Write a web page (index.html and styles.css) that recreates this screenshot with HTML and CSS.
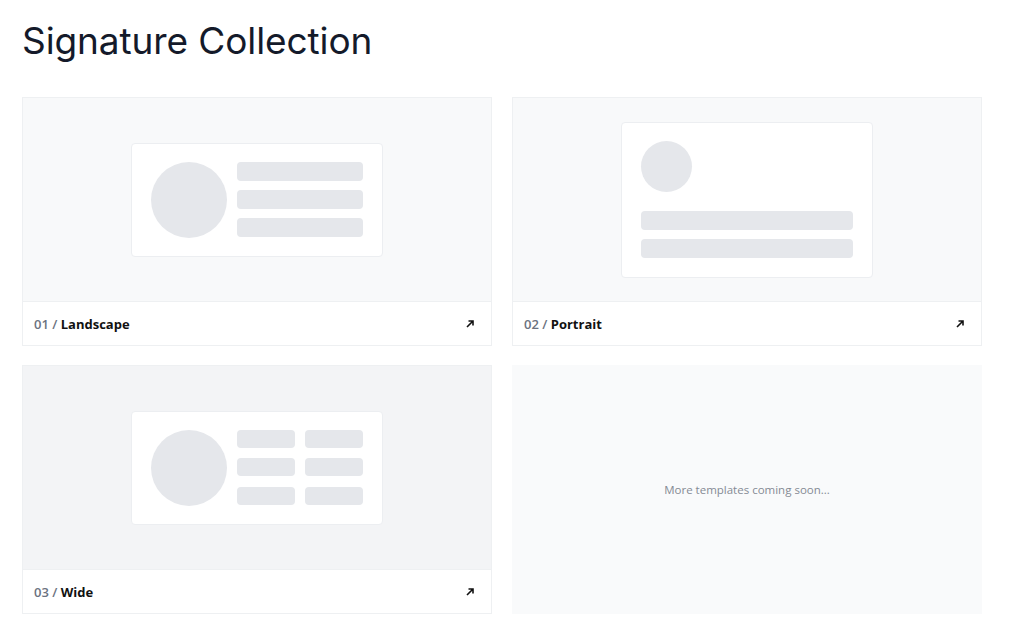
FILE: index.html
```html
<!DOCTYPE html>
<html lang="en">
<head>
  <meta charset="UTF-8" />
  <title>Signature Collection</title>
  <meta name="viewport" content="width=device-width, initial-scale=1.0" />
  <link rel="stylesheet" href="styles.css">
</head>
<body>

  <h1 class="page-title">Signature Collection</h1>

  <div class="template-grid">

    <!-- 01 landscape -->
    <div class="template-card">
      <div class="preview">
        <div class="mock mock-landscape">
          <div class="mock-avatar"></div>
          <div class="mock-lines">
            <div class="bar"></div>
            <div class="bar"></div>
            <div class="bar"></div>
          </div>
        </div>
      </div>
      <div class="caption">
        <span><span class="num">01 /</span> <b>Landscape</b></span>
        <svg class="arrow" width="10" height="10" viewBox="0 0 10 10"><path d="M2 8 L8 2 M3.5 2 H8 V6.5" fill="none" stroke="#111" stroke-width="1.6"/></svg>
      </div>
    </div>

    <!-- 02 portrait -->
    <div class="template-card">
      <div class="preview">
        <div class="mock mock-portrait">
          <div class="mock-avatar"></div>
          <div class="mock-lines">
            <div class="bar"></div>
            <div class="bar"></div>
          </div>
        </div>
      </div>
      <div class="caption">
        <span><span class="num">02 /</span> <b>Portrait</b></span>
        <svg class="arrow" width="10" height="10" viewBox="0 0 10 10"><path d="M2 8 L8 2 M3.5 2 H8 V6.5" fill="none" stroke="#111" stroke-width="1.6"/></svg>
      </div>
    </div>

    <!-- 03 wide -->
    <div class="template-card">
      <div class="preview preview-dark">
        <div class="mock mock-landscape">
          <div class="mock-avatar"></div>
          <div class="mock-grid">
            <div class="bar"></div><div class="bar"></div>
            <div class="bar"></div><div class="bar"></div>
            <div class="bar"></div><div class="bar"></div>
          </div>
        </div>
      </div>
      <div class="caption">
        <span><span class="num">03 /</span> <b>Wide</b></span>
        <svg class="arrow" width="10" height="10" viewBox="0 0 10 10"><path d="M2 8 L8 2 M3.5 2 H8 V6.5" fill="none" stroke="#111" stroke-width="1.6"/></svg>
      </div>
    </div>

    <div class="coming-soon">More templates coming soon...</div>

  </div>

</body>
</html>
```

FILE: styles.css
```css
* { box-sizing: border-box; }
body {
  margin: 0;
  padding: 0 42px 0 22px;
  background: #fff;
  font-family: "Open Sans", "Noto Sans", sans-serif;
  color: #111827;
}
.page-title {
  font-family: Inter, "DejaVu Sans", sans-serif;
  font-weight: 400;
  font-size: 37px;
  letter-spacing: -0.1px;
  line-height: 44px;
  margin: 19px 0 34px;
  color: #141a2a;
}
.template-grid {
  display: grid;
  grid-template-columns: 470px 470px;
  column-gap: 20px;
  row-gap: 19px;
}
.template-card {
  border: 1px solid #eef0f2;
  background: #fff;
  display: flex;
  flex-direction: column;
}
.preview {
  height: 203px;
  background: #f8f9fa;
  display: flex;
  align-items: center;
  justify-content: center;
}
.preview-dark { background: #f3f4f6; }
.mock {
  background: #fff;
  border: 1px solid #eceef1;
  border-radius: 4px;
  padding: 18px 19px;
}
.mock-landscape {
  width: 252px;
  height: 114px;
  display: flex;
  gap: 10px;
}
.mock-portrait {
  width: 252px;
  height: 156px;
  display: flex;
  flex-direction: column;
  gap: 19px;
}
.mock-avatar {
  width: 76px;
  height: 76px;
  border-radius: 50%;
  background: #e5e7eb;
  flex-shrink: 0;
}
.mock-portrait .mock-avatar { width: 51px; height: 51px; }
.mock-lines {
  flex: 1;
  display: flex;
  flex-direction: column;
  gap: 9px;
}
.mock-grid {
  flex: 1;
  display: grid;
  grid-template-columns: 1fr 1fr;
  gap: 10px;
}
.bar {
  height: 19px;
  border-radius: 4px;
  background: #e5e7eb;
}
.mock-grid .bar { height: 18px; }
.caption {
  height: 44px;
  border-top: 1px solid #eef0f2;
  display: flex;
  align-items: center;
  justify-content: space-between;
  padding: 0 16px 0 11px;
  font-size: 13px;
}
.caption .num { color: #6b7280; font-weight: 600; }
.caption b { font-weight: 700; color: #111; }
.arrow { display: block; }
.coming-soon {
  background: #f9fafb;
  display: flex;
  align-items: center;
  justify-content: center;
  font-size: 11.5px;
  color: #858a94;
  height: 249px;
}
```
